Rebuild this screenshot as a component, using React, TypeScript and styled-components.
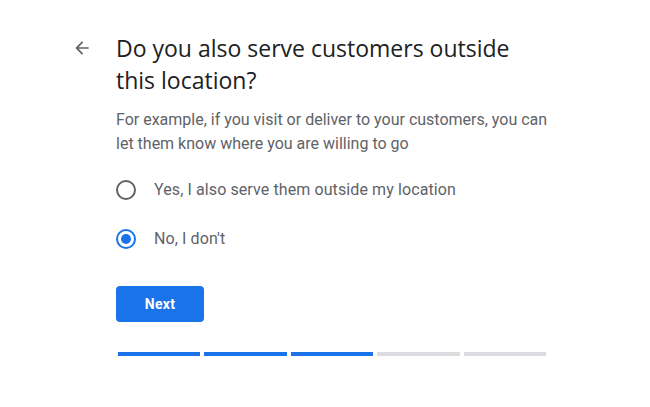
import styled, { createGlobalStyle } from 'styled-components'
import { useState } from 'react'

const GlobalStyle = createGlobalStyle`
  html, body {
    margin: 0;
    background: #fff;
  }
  * {
    box-sizing: border-box;
  }
`

const Page = styled.div`
  display: grid;
  grid-template-columns: 20px 432px;
  column-gap: 24px;
  padding: 32px 0 0 72px;
`

const BackButton = styled.button`
  width: 20px;
  height: 20px;
  margin-top: 6px;
  padding: 0;
  border: 0;
  background: none;
  color: #5f6368;
  cursor: pointer;
  display: flex;
  align-items: center;
  justify-content: center;
`

const Content = styled.div`
  display: flex;
  flex-direction: column;
`

const Title = styled.h1`
  margin: 0;
  max-width: 420px;
  font-family: 'Open Sans', 'Noto Sans', sans-serif;
  font-size: 23px;
  font-weight: 400;
  line-height: 32px;
  color: #202124;
`

const Description = styled.p`
  margin: 12px 0 9px;
  font-family: Roboto, 'Liberation Sans', sans-serif;
  font-size: 16px;
  line-height: 24px;
  color: #5f6368;
`

const OptionList = styled.div`
  display: flex;
  flex-direction: column;
`

const Option = styled.label`
  height: 49px;
  display: flex;
  align-items: center;
  gap: 18px;
  cursor: pointer;
  font-family: Roboto, 'Liberation Sans', sans-serif;
  font-size: 16px;
  letter-spacing: 0.1px;
  color: #5f6368;
`

const Radio = styled.span<{ $checked: boolean }>`
  width: 20px;
  height: 20px;
  border-radius: 50%;
  border: 2px solid ${(p) => (p.$checked ? '#1a73e8' : '#5f6368')};
  display: flex;
  align-items: center;
  justify-content: center;
  flex-shrink: 0;

  &::after {
    content: '';
    width: 10px;
    height: 10px;
    border-radius: 50%;
    background: #1a73e8;
    display: ${(p) => (p.$checked ? 'block' : 'none')};
  }
`

const NextButton = styled.button`
  margin-top: 23px;
  width: 88px;
  height: 36px;
  border: 0;
  border-radius: 4px;
  background: #1a73e8;
  color: #fff;
  font-family: Roboto, 'Liberation Sans', sans-serif;
  font-size: 14px;
  font-weight: 700;
  letter-spacing: 0.25px;
  cursor: pointer;
`

const Progress = styled.div`
  margin: 30px 0 0 2px;
  width: 428px;
  display: grid;
  grid-template-columns: repeat(5, 1fr);
  gap: 4px;
`

const Segment = styled.span<{ $done: boolean }>`
  height: 4px;
  background: ${(p) => (p.$done ? '#1a73e8' : '#dadce0')};
`

const options = [
  { id: 'yes', label: 'Yes, I also serve them outside my location' },
  { id: 'no', label: "No, I don't" },
]

export default function App() {
  const [answer, setAnswer] = useState('no')
  const step = 3

  return (
    <>
      <GlobalStyle />
      <Page>
        <BackButton type="button" aria-label="Back">
          <svg width="20" height="20" viewBox="0 0 24 24" fill="currentColor">
            <path d="M20 11H7.83l5.59-5.59L12 4l-8 8 8 8 1.41-1.41L7.83 13H20v-2z" />
          </svg>
        </BackButton>
        <Content>
          <Title>Do you also serve customers outside this location?</Title>
          <Description>
            For example, if you visit or deliver to your customers, you can let them know where you are willing to go
          </Description>
          <OptionList>
            {options.map((o) => (
              <Option key={o.id} onClick={() => setAnswer(o.id)}>
                <Radio $checked={answer === o.id} />
                {o.label}
              </Option>
            ))}
          </OptionList>
          <NextButton type="button">Next</NextButton>
          <Progress>
            {Array.from({ length: 5 }, (_, i) => (
              <Segment key={i} $done={i < step} />
            ))}
          </Progress>
        </Content>
      </Page>
    </>
  )
}
